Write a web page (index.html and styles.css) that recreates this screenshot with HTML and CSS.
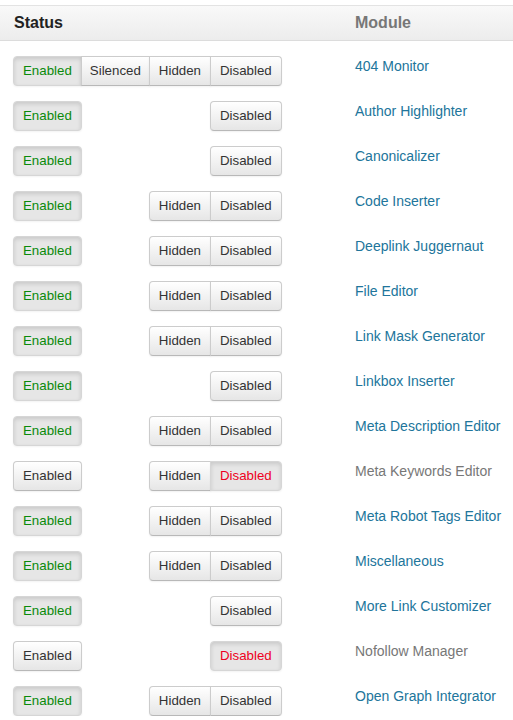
FILE: index.html
```html
<!DOCTYPE html>
<html>
<head>
<meta charset="utf-8">
<link rel="stylesheet" href="styles.css">
</head>
<body>
<div class="table">
  <div class="head">
    <div class="h-status">Status</div>
    <div class="h-module">Module</div>
  </div>

  <div class="row">
    <div class="btns"><span class="grp"><span class="btn on-green">Enabled</span><span class="btn sil">Silenced</span><span class="btn">Hidden</span><span class="btn">Disabled</span></span></div>
    <div class="mod"><a class="link">404 Monitor</a></div>
  </div>
  <div class="row">
    <div class="btns"><span class="grp"><span class="btn on-green">Enabled</span></span><span class="btn sil ghost">Silenced</span><span class="btn ghost">Hidden</span><span class="grp"><span class="btn">Disabled</span></span></div>
    <div class="mod"><a class="link">Author Highlighter</a></div>
  </div>
  <div class="row">
    <div class="btns"><span class="grp"><span class="btn on-green">Enabled</span></span><span class="btn sil ghost">Silenced</span><span class="btn ghost">Hidden</span><span class="grp"><span class="btn">Disabled</span></span></div>
    <div class="mod"><a class="link">Canonicalizer</a></div>
  </div>
  <div class="row">
    <div class="btns"><span class="grp"><span class="btn on-green">Enabled</span></span><span class="btn sil ghost">Silenced</span><span class="grp"><span class="btn">Hidden</span><span class="btn">Disabled</span></span></div>
    <div class="mod"><a class="link">Code Inserter</a></div>
  </div>
  <div class="row">
    <div class="btns"><span class="grp"><span class="btn on-green">Enabled</span></span><span class="btn sil ghost">Silenced</span><span class="grp"><span class="btn">Hidden</span><span class="btn">Disabled</span></span></div>
    <div class="mod"><a class="link">Deeplink Juggernaut</a></div>
  </div>
  <div class="row">
    <div class="btns"><span class="grp"><span class="btn on-green">Enabled</span></span><span class="btn sil ghost">Silenced</span><span class="grp"><span class="btn">Hidden</span><span class="btn">Disabled</span></span></div>
    <div class="mod"><a class="link">File Editor</a></div>
  </div>
  <div class="row">
    <div class="btns"><span class="grp"><span class="btn on-green">Enabled</span></span><span class="btn sil ghost">Silenced</span><span class="grp"><span class="btn">Hidden</span><span class="btn">Disabled</span></span></div>
    <div class="mod"><a class="link">Link Mask Generator</a></div>
  </div>
  <div class="row">
    <div class="btns"><span class="grp"><span class="btn on-green">Enabled</span></span><span class="btn sil ghost">Silenced</span><span class="btn ghost">Hidden</span><span class="grp"><span class="btn">Disabled</span></span></div>
    <div class="mod"><a class="link">Linkbox Inserter</a></div>
  </div>
  <div class="row">
    <div class="btns"><span class="grp"><span class="btn on-green">Enabled</span></span><span class="btn sil ghost">Silenced</span><span class="grp"><span class="btn">Hidden</span><span class="btn">Disabled</span></span></div>
    <div class="mod"><a class="link">Meta Description Editor</a></div>
  </div>
  <div class="row">
    <div class="btns"><span class="grp"><span class="btn">Enabled</span></span><span class="btn sil ghost">Silenced</span><span class="grp"><span class="btn">Hidden</span><span class="btn on-red">Disabled</span></span></div>
    <div class="mod"><a class="link off">Meta Keywords Editor</a></div>
  </div>
  <div class="row">
    <div class="btns"><span class="grp"><span class="btn on-green">Enabled</span></span><span class="btn sil ghost">Silenced</span><span class="grp"><span class="btn">Hidden</span><span class="btn">Disabled</span></span></div>
    <div class="mod"><a class="link">Meta Robot Tags Editor</a></div>
  </div>
  <div class="row">
    <div class="btns"><span class="grp"><span class="btn on-green">Enabled</span></span><span class="btn sil ghost">Silenced</span><span class="grp"><span class="btn">Hidden</span><span class="btn">Disabled</span></span></div>
    <div class="mod"><a class="link">Miscellaneous</a></div>
  </div>
  <div class="row">
    <div class="btns"><span class="grp"><span class="btn on-green">Enabled</span></span><span class="btn sil ghost">Silenced</span><span class="btn ghost">Hidden</span><span class="grp"><span class="btn">Disabled</span></span></div>
    <div class="mod"><a class="link">More Link Customizer</a></div>
  </div>
  <div class="row">
    <div class="btns"><span class="grp"><span class="btn">Enabled</span></span><span class="btn sil ghost">Silenced</span><span class="btn ghost">Hidden</span><span class="grp"><span class="btn on-red">Disabled</span></span></div>
    <div class="mod"><a class="link off">Nofollow Manager</a></div>
  </div>
  <div class="row">
    <div class="btns"><span class="grp"><span class="btn on-green">Enabled</span></span><span class="btn sil ghost">Silenced</span><span class="grp"><span class="btn">Hidden</span><span class="btn">Disabled</span></span></div>
    <div class="mod"><a class="link">Open Graph Integrator</a></div>
  </div>
</div>
</body>
</html>
```

FILE: styles.css
```css
html, body {
  margin: 0;
  padding: 0;
  background: #fff;
}
body {
  font-family: "Liberation Sans", Arial, sans-serif;
  color: #333;
  padding-top: 5px;
}
.table {
  width: 513px;
}
.head {
  display: grid;
  grid-template-columns: 355px 1fr;
  height: 34px;
  border-top: 1px solid #e3e3e3;
  border-bottom: 1px solid #dcdcdc;
  background: linear-gradient(#f9f9f9, #ececec);
  font-weight: bold;
  font-size: 16px;
  line-height: 34px;
}
.h-status {
  padding-left: 14px;
  color: #222;
}
.h-module {
  color: #777;
}
.row {
  display: grid;
  grid-template-columns: 355px 1fr;
  height: 45px;
  align-items: start;
}
.btns {
  display: flex;
  padding-left: 13px;
  padding-top: 15px;
}
.btns > * + * {
  margin-left: -1px;
}
.grp {
  display: flex;
}
.grp .btn + .btn {
  margin-left: -1px;
}
.btn {
  display: block;
  font-size: 13.3px;
  line-height: 20px;
  padding: 4px 9px;
  color: #333;
  border: 1px solid #ccc;
  border-bottom-color: #b8b8b8;
  background: linear-gradient(#ffffff, #e6e6e6);
  box-shadow: inset 0 1px 0 rgba(255,255,255,.2), 0 1px 2px rgba(0,0,0,.06);
  white-space: nowrap;
}
.btn.sil {
  padding-left: 8px;
  padding-right: 8px;
}
.grp .btn:first-child {
  border-top-left-radius: 4px;
  border-bottom-left-radius: 4px;
}
.grp .btn:last-child {
  border-top-right-radius: 4px;
  border-bottom-right-radius: 4px;
}
.btn.ghost {
  visibility: hidden;
}
.btn.on-green,
.btn.on-red {
  background: #e6e6e6;
  border-color: #d6d6d6;
  box-shadow: inset 0 2px 4px rgba(0,0,0,.13), 0 1px 2px rgba(0,0,0,.05);
}
.btn.on-green {
  color: #0a8a0a;
}
.btn.on-red {
  color: #ee0022;
}
.mod {
  padding-top: 15px;
  font-size: 14px;
  line-height: 20px;
}
.link {
  color: #21759b;
  text-decoration: none;
}
.link.off {
  color: #777;
}
```
